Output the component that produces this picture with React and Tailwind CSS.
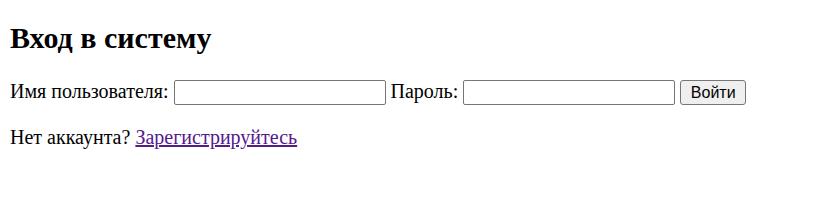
import React from "react";

export default function App() {
  return (
    <div className="px-[10px] font-['Liberation_Serif',serif] text-[20px] text-black bg-white">
      <h1 className="text-[30px] font-bold leading-[34px] mt-[21px] mb-0">Вход в систему</h1>
      <form className="mt-[25px] flex items-start h-[25px]" onSubmit={(e) => e.preventDefault()}>
        <label htmlFor="u" className="leading-[23px]">Имя пользователя:</label>
        <input id="u" type="text" className="ml-[5px] w-[212px] h-[25px] border border-[#767676] rounded-[2px] bg-white px-1 text-[13px]" />
        <label htmlFor="p" className="ml-[5px] leading-[23px]">Пароль:</label>
        <input id="p" type="password" className="ml-[5px] w-[212px] h-[25px] border border-[#767676] rounded-[2px] bg-white px-1 text-[13px]" />
        <button type="submit" className="ml-[5px] w-[66px] h-[25px] bg-[#efefef] border border-[#767676] rounded-[3px] font-['Liberation_Sans',sans-serif] text-[16px] leading-none">Войти</button>
      </form>
      <p className="mt-[21px] leading-[23px]">
        Нет аккаунта? <a href="#" className="text-[#551a8b] underline">Зарегистрируйтесь</a>
      </p>
    </div>
  );
}
